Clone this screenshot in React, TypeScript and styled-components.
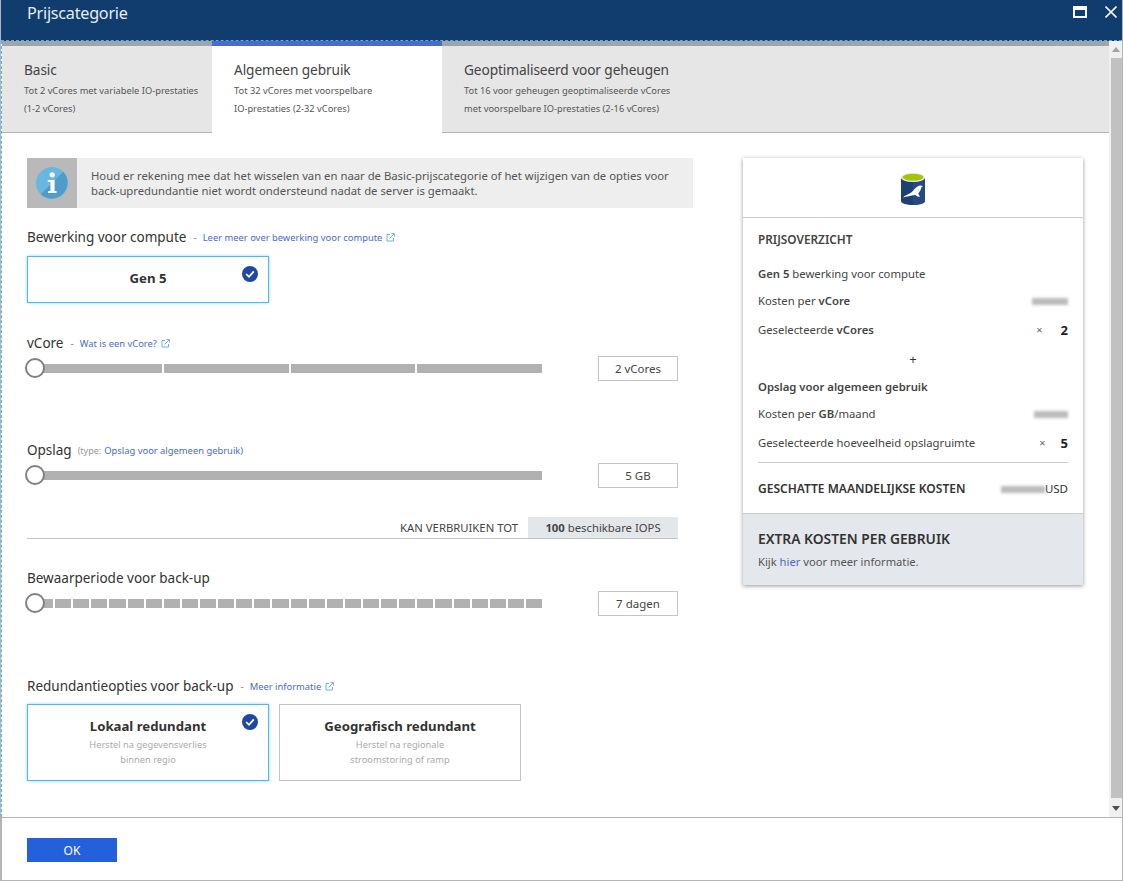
import React from "react";
import styled, { createGlobalStyle } from "styled-components";

const Global = createGlobalStyle`
  html, body { margin: 0; padding: 0; background: #fff; }
  body { font-family: "Noto Sans", "Open Sans", "Liberation Sans", sans-serif; color: #333; }
  * { box-sizing: border-box; }
`;

const Window = styled.div`
  width: 1123px; height: 881px; display: flex; flex-direction: column; overflow: hidden;
  border: 1px solid #b4b4b4; border-top: 0; background: #fff;
`;
const Header = styled.header`
  height: 41px; flex: none; background: #103c6e; display: flex; align-items: flex-start;
  justify-content: space-between; padding: 0 5px 0 26px; border-bottom: 1px dashed #4fb3ea;
`;
const Title = styled.h1`
  margin: 0; color: #e4ecf4; font-size: 16.2px; font-weight: 400; line-height: 26px; letter-spacing: -0.25px;
`;
const HeaderActions = styled.div`
  display: flex; gap: 18px; align-items: center; height: 24px;
`;
const Main = styled.div`
  flex: 1; min-height: 0; display: flex; border-left: 1px dashed #4fb3ea;
`;
const Scroller = styled.div`
  flex: 1; min-width: 0; display: flex; flex-direction: column;
`;
const ScrollBar = styled.div`
  width: 13px; flex: none; display: flex; flex-direction: column; background: #f0f0f0;
`;
const ScrollButton = styled.div`
  height: 17px; display: flex; align-items: center; justify-content: center; flex: none;
`;
const ScrollThumb = styled.div`
  flex: 1; background: #c1c1c1; margin-left: 2px;
`;
const ScrollRest = styled.div`height: 2px; flex: none;`;

const Tabs = styled.nav`
  height: 92px; flex: none; display: flex; background: #e6e6e6; border-top: 5px solid #a0a5a8;
  border-bottom: 1px solid #b4b4b4;
`;
const Tab = styled.div<{ $active?: boolean; $width: number }>`
  width: ${p => p.$width}px; padding: 15px 0 0 22px;
  background: ${p => p.$active ? "#fff" : "transparent"};
  position: relative;
  ${p => p.$active ? "margin-bottom: -1px; &::before { content: ''; position: absolute; left: 0; right: 0; top: -5px; height: 5px; background: #4a6bc8; }" : ""}
`;
const TabTitle = styled.div`
  font-size: 13.7px; line-height: 18px; color: #444; letter-spacing: -0.1px;
`;
const TabText = styled.div`
  font-size: 9.3px; line-height: 18px; color: #555; margin-top: 3px;
`;

const Body = styled.div`
  flex: 1; min-height: 0; display: flex; align-items: flex-start; padding: 25px 0 0 25px;
`;
const Left = styled.div`
  width: 666px; flex: none;
`;
const Notice = styled.div`
  height: 50px; background: #eee; display: flex; align-items: center;
`;
const NoticeIcon = styled.div`
  width: 50px; height: 50px; background: #b9b9b9; display: flex; align-items: center; justify-content: center; flex: none;
`;
const NoticeText = styled.p`
  margin: 0 0 0 14px; font-size: 11.3px; line-height: 15px; color: #555; width: 595px;
`;
const Label = styled.div<{ $top: number }>`
  margin-top: ${p => p.$top}px; height: 18px; display: flex; align-items: center; white-space: nowrap;
  font-size: 13.5px; color: #333;
`;
const Dash = styled.span`color: #888; font-size: 10px; margin: 0 6px 0 7px;`;
const Note = styled.span`color: #999; font-size: 9px; margin: 1px 3px 0 6px;`;
const Link = styled.a`
  color: #4a6bc8; font-size: 9.4px; display: inline-flex; align-items: center; gap: 4px; margin-top: 1px;
`;
const InlineLink = styled.a`color: #4a6bc8;`;

const Choices = styled.div<{ $top: number }>`
  display: flex; gap: 10px; margin-top: ${p => p.$top}px;
`;
const Choice = styled.div<{ $selected?: boolean; $height: number }>`
  width: 242px; height: ${p => p.$height}px; position: relative; text-align: center; background: #fff;
  border: 1px solid ${p => p.$selected ? "#4cb8f5" : "#c4c4c4"};
  ${p => p.$selected ? "box-shadow: 0 0 3px rgba(76,184,245,.6);" : ""}
  padding-top: 11px;
`;
const ChoiceTitle = styled.div`
  font-size: 13.2px; line-height: 20px; font-weight: 700; color: #333; margin-bottom: 1px;
`;
const ChoiceText = styled.div`
  font-size: 9.3px; line-height: 15px; color: #aaa;
`;
const Check = styled.span`
  position: absolute; right: 10px; top: 9px; width: 16px; height: 16px; display: block; line-height: 0;
`;

const SliderRow = styled.div`
  display: flex; align-items: center; margin-top: 4px; height: 25px;
`;
const Track = styled.div`
  width: 505px; margin-left: 10px; height: 9px; display: flex; gap: 2px; position: relative;
`;
const Segment = styled.div`
  flex: 1; background: #b1b1b1;
`;
const Thumb = styled.div`
  position: absolute; left: -12px; top: -6px; width: 20px; height: 20px; border-radius: 50%;
  background: #fff; border: 2px solid #808080;
`;
const ValueBox = styled.div`
  width: 80px; height: 25px; margin-left: 56px; border: 1px solid #c4c4c4; display: flex; align-items: center;
  justify-content: center; font-size: 11.5px; color: #444;
`;
const Iops = styled.div`
  height: 22px; margin-top: 29px; width: 651px; display: flex; justify-content: flex-end; align-items: stretch;
  border-bottom: 1px solid #c4c4c4; font-size: 11.3px; color: #444;
`;
const IopsLabel = styled.span`
  display: flex; align-items: center; margin-right: 10px;
`;
const IopsValue = styled.span`
  width: 150px; background: #e4e7ea; display: flex; align-items: center; justify-content: center;
  b { font-weight: 700; margin-right: 3px; }
`;

const Summary = styled.aside`
  width: 340px; margin-left: 50px; flex: none; background: #fff;
  box-shadow: 0 1px 4px rgba(0,0,0,.42);
`;
const LogoBlock = styled.div`
  height: 60px; display: flex; align-items: center; justify-content: center; border-bottom: 1px solid #ccc; padding-top: 3px;
`;
const SummaryMain = styled.div`
  padding: 13px 15px 0; height: 295px;
`;
const SummaryHead = styled.div`
  font-size: 11.8px; font-weight: 600; color: #444; line-height: 16px;
`;
const SummaryRow = styled.div<{ $top: number }>`
  display: flex; align-items: center; justify-content: space-between; margin-top: ${p => p.$top}px;
  line-height: 16px; font-size: 11.3px; color: #444;
  b { font-weight: 600; }
`;
const Multi = styled.span<{ $gap: number }>`
  display: inline-flex; align-items: center; gap: ${p => p.$gap}px; font-size: 11px; color: #666;
  strong { font-size: 13px; color: #222; font-weight: 700; }
`;
const Blurred = styled.span<{ $width: number }>`
  display: inline-block; width: ${p => p.$width}px; height: 7px; background: #aaa; filter: blur(1.6px); opacity: .8;
`;
const Plus = styled.div`
  text-align: center; font-size: 13px; line-height: 16px; margin-top: 13px; color: #333;
`;
const Rule = styled.div`
  height: 1px; background: #ccc; margin-top: 11px;
`;
const TotalRow = styled(SummaryRow)`
  color: #333; font-weight: 600; font-size: 12px;
  span:last-child { font-weight: 400; font-size: 11.5px; display: inline-flex; align-items: center; }
`;
const Extra = styled.div`
  height: 72px; background: #e4e7ec; border-top: 1px solid #ccc; padding: 16px 15px 0;
`;
const ExtraTitle = styled.div`
  font-size: 13.8px; line-height: 18px; font-weight: 600; color: #333;
`;
const ExtraText = styled.div`
  font-size: 11.2px; line-height: 16px; color: #555; margin-top: 6px;
`;

const Footer = styled.footer`
  height: 63px; flex: none; border-top: 1px solid #b4b4b4; border-left: 1px solid #b4b4b4; padding: 20px 0 0 25px;
`;
const OkButton = styled.button`
  width: 90px; height: 24px; background: #2560dc; color: #fff; border: 0; padding: 0; font: inherit; font-size: 12px; display: block;
`;

const ExternalIcon = () => (
  <svg width="9" height="9" viewBox="0 0 9 9" fill="none" stroke="#5ba8dd" strokeWidth="0.9">
    <path d="M4 1.5H1V8H7.5V5" /><path d="M3.6 5.4L8.2 0.8M5.4 0.6H8.4V3.6" />
  </svg>
);
const CheckIcon = () => (
  <Check>
    <svg width="16" height="16" viewBox="0 0 16 16">
      <circle cx="8" cy="8" r="8" fill="#1c4aa5" />
      <path d="M4.2 8.2L7 10.8L11.8 5.4" fill="none" stroke="#fff" strokeWidth="1.8" />
    </svg>
  </Check>
);
const InfoIcon = () => (
  <svg width="32" height="32" viewBox="0 0 32 32">
    <circle cx="16" cy="16" r="16" fill="#69b7df" />
    <path d="M27.3 4.7A16 16 0 0 1 4.7 27.3Z" fill="#4d9cca" />
    <circle cx="16.2" cy="7.8" r="2.6" fill="#fff" />
    <path d="M11.8 13H18.6V24H20.6V26H12V24H14.4V15H11.8Z" fill="#fff" />
  </svg>
);
const LogoIcon = () => (
  <svg width="24" height="32" viewBox="0 0 24 32">
    <path d="M0 4.5V28C0 30.4 5.4 32 12 32S24 30.4 24 28V4.5Z" fill="#1f3f73" />
    <path d="M12 14V32C18.6 32 24 30.4 24 28V4.5L12 9Z" fill="#2c4f86" opacity=".7" />
    <ellipse cx="12" cy="4.5" rx="12" ry="4.5" fill="#e8eef0" />
    <ellipse cx="12" cy="4.3" rx="10.5" ry="3.5" fill="#a4c400" />
    <path d="M2 24.5C4 22 7 21.5 9.5 20C12.5 18 14.5 14 18.5 12.5C19.8 12.2 21 12.6 22 13.6L20.4 14.2C20 16.6 18.6 19 17.2 20.4L19 23.8H17L14.4 22C11.5 22.4 8 23 7 23.5L5.5 23.5C4.5 23.9 3.2 24.2 2 24.5Z" fill="#fff" />
  </svg>
);

const Slider = ({ segments, value }: { segments: number; value: string }) => (
  <SliderRow>
    <Track>
      {Array.from({ length: segments }, (_, i) => <Segment key={i} />)}
      <Thumb />
    </Track>
    <ValueBox>{value}</ValueBox>
  </SliderRow>
);

export default function App() {
  return (
    <>
      <Global />
      <Window>
        <Header>
          <Title>Prijscategorie</Title>
          <HeaderActions>
            <svg width="14" height="12" viewBox="0 0 14 12" aria-hidden="true">
              <path d="M0 0H14V12H0ZM2 4V10H12V4Z" fill="#fff" fillRule="evenodd" />
            </svg>
            <svg width="12" height="12" viewBox="0 0 12 12" aria-hidden="true">
              <path d="M0.5 0.5L11.5 11.5M11.5 0.5L0.5 11.5" stroke="#f2f4f7" strokeWidth="1.6" />
            </svg>
          </HeaderActions>
        </Header>
        <Main>
          <Scroller>
            <Tabs>
              <Tab $width={210}>
                <TabTitle>Basic</TabTitle>
                <TabText>Tot 2 vCores met variabele IO-prestaties<br />(1-2 vCores)</TabText>
              </Tab>
              <Tab $active $width={230}>
                <TabTitle>Algemeen gebruik</TabTitle>
                <TabText>Tot 32 vCores met voorspelbare<br />IO-prestaties (2-32 vCores)</TabText>
              </Tab>
              <Tab $width={300}>
                <TabTitle>Geoptimaliseerd voor geheugen</TabTitle>
                <TabText>Tot 16 voor geheugen geoptimaliseerde vCores<br />met voorspelbare IO-prestaties (2-16 vCores)</TabText>
              </Tab>
            </Tabs>
            <Body>
              <Left>
                <Notice>
                  <NoticeIcon><InfoIcon /></NoticeIcon>
                  <NoticeText>Houd er rekening mee dat het wisselen van en naar de Basic-prijscategorie of het wijzigen van de opties voor back-upredundantie niet wordt ondersteund nadat de server is gemaakt.</NoticeText>
                </Notice>
                <Label $top={20}>Bewerking voor compute<Dash>-</Dash><Link>Leer meer over bewerking voor compute <ExternalIcon /></Link></Label>
                <Choices $top={10}>
                  <Choice $selected $height={47}><ChoiceTitle>Gen 5</ChoiceTitle><CheckIcon /></Choice>
                </Choices>
                <Label $top={31}>vCore<Dash>-</Dash><Link>Wat is een vCore? <ExternalIcon /></Link></Label>
                <Slider segments={4} value="2 vCores" />
                <Label $top={60}>Opslag<Note>(type:</Note><Link>Opslag voor algemeen gebruik)</Link></Label>
                <Slider segments={1} value="5 GB" />
                <Iops><IopsLabel>KAN VERBRUIKEN TOT</IopsLabel><IopsValue><b>100</b> beschikbare IOPS</IopsValue></Iops>
                <Label $top={30}>Bewaarperiode voor back-up</Label>
                <Slider segments={28} value="7 dagen" />
                <Label $top={61}>Redundantieopties voor back-up<Dash>-</Dash><Link>Meer informatie <ExternalIcon /></Link></Label>
                <Choices $top={9}>
                  <Choice $selected $height={77}>
                    <ChoiceTitle>Lokaal redundant</ChoiceTitle>
                    <ChoiceText>Herstel na gegevensverlies</ChoiceText>
                    <ChoiceText>binnen regio</ChoiceText>
                    <CheckIcon />
                  </Choice>
                  <Choice $height={77}>
                    <ChoiceTitle>Geografisch redundant</ChoiceTitle>
                    <ChoiceText>Herstel na regionale</ChoiceText>
                    <ChoiceText>stroomstoring of ramp</ChoiceText>
                  </Choice>
                </Choices>
              </Left>
              <Summary>
                <LogoBlock><LogoIcon /></LogoBlock>
                <SummaryMain>
                  <SummaryHead>PRIJSOVERZICHT</SummaryHead>
                  <SummaryRow $top={19}><span><b>Gen 5</b> bewerking voor compute</span></SummaryRow>
                  <SummaryRow $top={11}><span>Kosten per <b>vCore</b></span><Blurred $width={36} /></SummaryRow>
                  <SummaryRow $top={13}><span>Geselecteerde <b>vCores</b></span><Multi $gap={18}>×<strong>2</strong></Multi></SummaryRow>
                  <Plus>+</Plus>
                  <SummaryRow $top={12}><b>Opslag voor algemeen gebruik</b></SummaryRow>
                  <SummaryRow $top={11}><span>Kosten per <b>GB</b>/maand</span><Blurred $width={34} /></SummaryRow>
                  <SummaryRow $top={13}><span>Geselecteerde hoeveelheid opslagruimte</span><Multi $gap={15}>×<strong>5</strong></Multi></SummaryRow>
                  <Rule />
                  <TotalRow $top={18}><span>GESCHATTE MAANDELIJKSE KOSTEN</span><span><Blurred $width={44} />USD</span></TotalRow>
                </SummaryMain>
                <Extra>
                  <ExtraTitle>EXTRA KOSTEN PER GEBRUIK</ExtraTitle>
                  <ExtraText>Kijk <InlineLink>hier</InlineLink> voor meer informatie.</ExtraText>
                </Extra>
              </Summary>
            </Body>
          </Scroller>
          <ScrollBar>
            <ScrollButton>
              <svg width="8" height="5" viewBox="0 0 8 5"><path d="M4 0L8 5H0Z" fill="#a3a3a3" /></svg>
            </ScrollButton>
            <ScrollThumb />
            <ScrollRest />
            <ScrollButton>
              <svg width="8" height="5" viewBox="0 0 8 5"><path d="M0 0H8L4 5Z" fill="#505050" /></svg>
            </ScrollButton>
          </ScrollBar>
        </Main>
        <Footer><OkButton>OK</OkButton></Footer>
      </Window>
    </>
  );
}
